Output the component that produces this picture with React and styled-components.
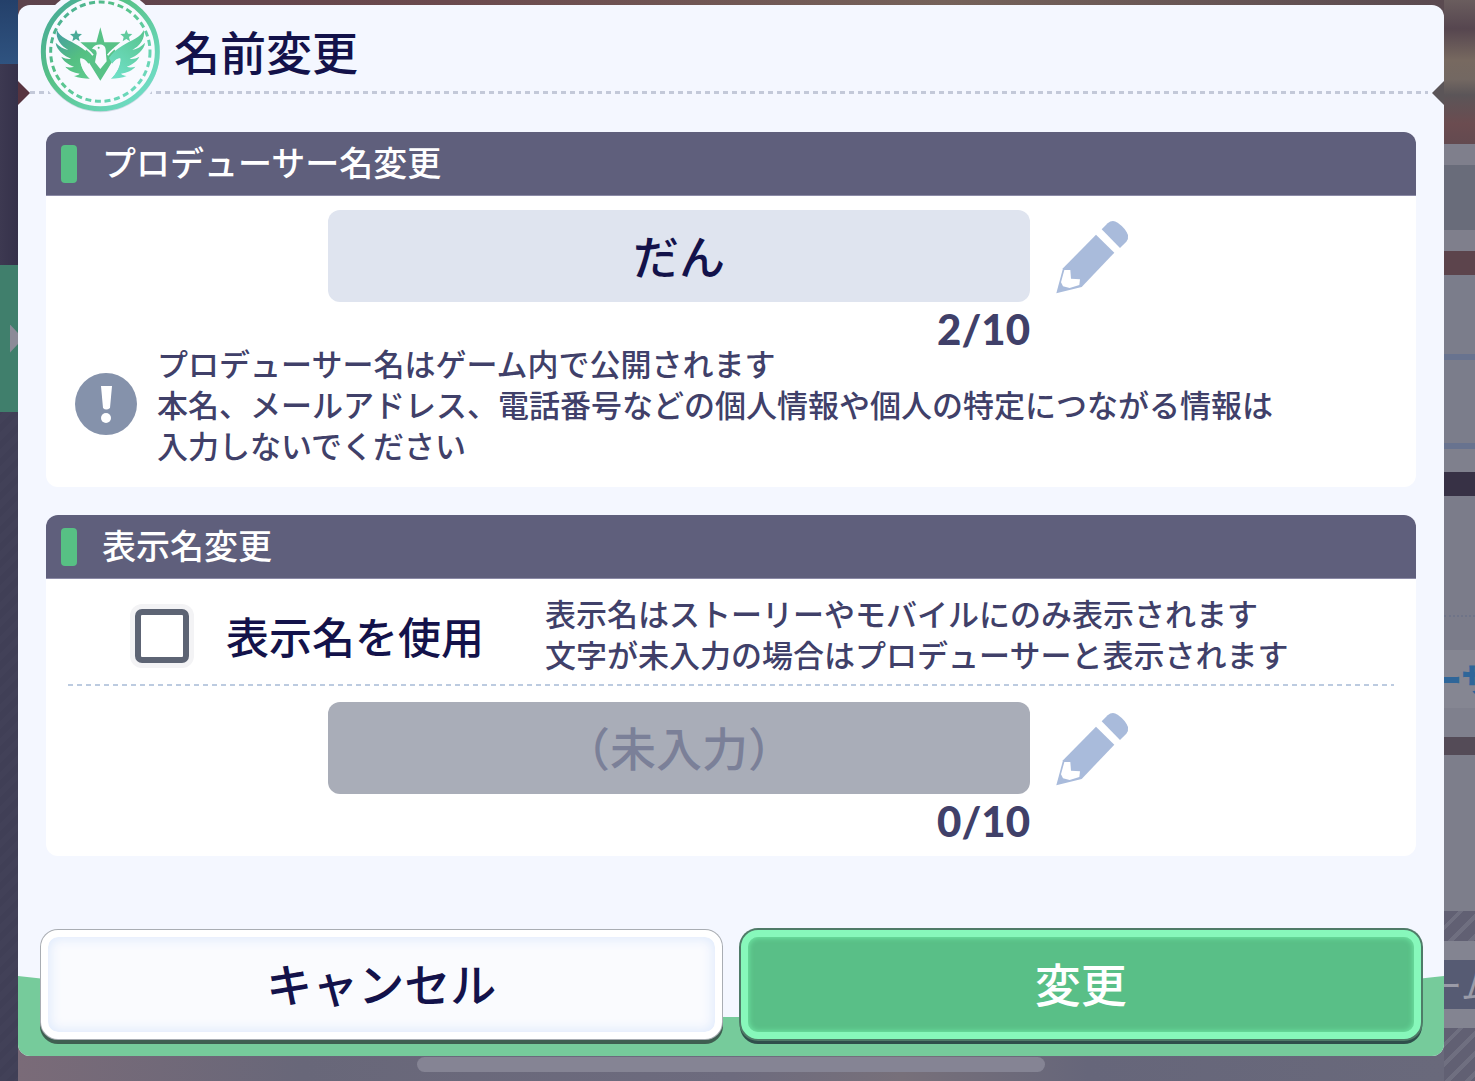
import React, { useRef, useState } from 'react'
import styled, { createGlobalStyle } from 'styled-components'

const GlobalStyle = createGlobalStyle`
  * {
    box-sizing: border-box;
  }

  body {
    margin: 0;
    background-color: #5c5a6c;
    font-family: "Noto Sans CJK JP", "Noto Sans", sans-serif;
  }

  button, input {
    font-family: inherit;
  }
`

const Screen = styled.div`
  min-height: 100vh;
  display: grid;
  grid-template-columns: 18px minmax(0, 1fr) 31px;
`

/* dimmed game screen on both sides of the dialog */

const LeftEdge = styled.div`
  display: flex;
  flex-direction: column;
  overflow: hidden;
  background: repeating-linear-gradient(135deg, #403f56 0 6px, #424158 6px 12px);
`

const LeftSky = styled.div`
  height: 64px;
  background: linear-gradient(#24406a, #2f5380);
`

const LeftWall = styled.div`
  height: 201px;
  background: linear-gradient(90deg, #3d3951, #35314a);
`

const LeftTab = styled.div`
  height: 147px;
  display: flex;
  align-items: center;
  justify-content: flex-end;
  background-color: #407f6c;
`

const TabArrow = styled.span`
  width: 8px;
  height: 28px;
  background-color: #8c8b98;
  clip-path: polygon(0 0, 100% 30%, 100% 70%, 0 100%);
`

const RightEdge = styled.div`
  display: flex;
  flex-direction: column;
  overflow: hidden;
  background-color: #7d7e8c;
`

const Strip = styled.div`
  flex: ${props => props.$grow ? '1 0 auto' : 'none'};
  height: ${props => props.$h}px;
  background: ${props => props.$bg};
  color: ${props => props.$color || '#9a9ba8'};
  display: flex;
  align-items: center;
  white-space: nowrap;
  overflow: hidden;
  font-size: 34px;
  line-height: 40px;
  font-weight: ${props => props.$bold ? 900 : 400};
  text-indent: -16px;
`

const DottedStrip = styled(Strip)`
  border-top: 2px dotted #6f7488;
`

const hatch = 'repeating-linear-gradient(135deg, #616073 0 10px, #6f6f80 10px 14px)'

/* dialog */

const Center = styled.div`
  display: flex;
  flex-direction: column;
  padding-top: 5px;
  background: linear-gradient(90deg, #5d434c, #6b4a4e 30%, #75625a 65%, #5a4a50) top / 100% 40px no-repeat,
    linear-gradient(90deg, #7a6b78, #686779 20%, #6d6b7e 50%, #77707a 62%, #66667a 75%, #69697b);
`

const Dialog = styled.form`
  position: relative;
  flex: 1;
  display: flex;
  flex-direction: column;
  margin: 0;
  border-radius: 12px;
  background-color: #f4f7ff;
`

const DialogHeader = styled.header`
  position: relative;
  height: 89px;
  padding: 0 28px 0 156px;
  display: flex;
  align-items: center;

  &::before, &::after {
    content: "";
    position: absolute;
    bottom: -11px;
    width: 12px;
    height: 24px;
  }

  &::before {
    left: 0;
    background-color: #573440;
    clip-path: polygon(0 0, 100% 50%, 0 100%);
  }

  &::after {
    right: 0;
    background-color: #5b5558;
    clip-path: polygon(100% 0, 0 50%, 100% 100%);
  }
`

const HeaderRule = styled.span`
  position: absolute;
  left: 12px;
  right: 16px;
  bottom: 0;
  height: 3px;
  background: repeating-linear-gradient(90deg, #c3c9d9 0 5px, transparent 5px 9px);
`

const EmblemBadge = styled.span`
  position: absolute;
  left: 17px;
  top: -15px;
  display: flex;
`

const DialogTitle = styled.h1`
  margin: 0;
  color: #13124a;
  font-size: 46px;
  line-height: 60px;
  font-weight: 500;
`

const DialogBody = styled.div`
  display: flex;
  flex-direction: column;
  gap: 28px;
  padding: 38px 28px 74px;
`

const Card = styled.section`
  overflow: hidden;
  border-radius: 12px;
  background-color: #fff;
`

const CardHeader = styled.header`
  height: 64px;
  display: flex;
  align-items: center;
  gap: 25px;
  padding: 0 15px;
  border-bottom: 1px solid #8b8aa6;
  background-color: #5f5f7c;

  &::before {
    content: "";
    width: 16px;
    height: 38px;
    border-radius: 4px;
    background-color: #57c084;
  }
`

const CardTitle = styled.h2`
  margin: 0;
  padding-bottom: 3px;
  color: #fff;
  font-size: 34px;
  line-height: 48px;
  font-weight: 500;
`

const FieldGrid = styled.div`
  display: grid;
  grid-template-columns: minmax(0, 702px) 104px;
  justify-content: center;
  align-items: center;
  padding-top: ${props => props.$top}px;
`

const TextBox = styled.input`
  width: 100%;
  height: 92px;
  padding: 0 16px 4px;
  border: none;
  border-radius: 12px;
  background-color: #dfe4ef;
  color: #13124a;
  font-size: 46px;
  font-style: oblique 10deg;
  font-weight: 500;
  text-align: center;
  outline: none;

  &::placeholder {
    color: #7b8098;
    opacity: 1;
    font-style: normal;
    font-weight: 500;
  }

  &:disabled {
    background-color: #a9adb8;
  }
`

const EditButton = styled.button`
  display: flex;
  padding: 2px 0 0;
  margin-left: 26px;
  border: none;
  background: none;
  cursor: pointer;

  &:disabled {
    cursor: default;
  }
`

const Counter = styled.output`
  padding-top: 14px;
  color: #404069;
  font-family: Lato, "Liberation Sans", sans-serif;
  font-size: 42px;
  line-height: 26px;
  font-weight: 900;
  text-align: right;
`

const Notice = styled.div`
  display: flex;
  align-items: center;
  gap: 20px;
  padding: 0 29px;

  svg {
    flex: none;
  }
`

const CardFoot = styled.div`
  height: 22px;
`

const Text = styled.p`
  margin: 0;
  color: #404069;
  font-size: 31px;
  line-height: 41px;
  font-weight: 500;
`

const OptionRow = styled.div`
  display: flex;
  align-items: flex-start;
  gap: 61px;
  margin: 0 22px;
  padding: 13px 0 12px 67px;
  background: repeating-linear-gradient(90deg, #bccbe0 0 5px, transparent 5px 9px) bottom / 100% 2px no-repeat;
`

const CheckLabel = styled.label`
  flex: none;
  display: flex;
  align-items: center;
  gap: 37px;
  padding-top: 15px;
  color: #13124a;
  font-size: 43px;
  line-height: 54px;
  font-weight: 500;
  cursor: pointer;
`

const CheckBox = styled.input`
  appearance: none;
  width: 54px;
  height: 54px;
  margin: 2px 0 0;
  display: grid;
  place-items: center;
  border: 6px solid #5d6474;
  border-radius: 7px;
  background-color: #fff;
  box-shadow: 0 0 0 5px #f3f3f5;

  &:checked::before {
    content: "";
    width: 28px;
    height: 28px;
    border-radius: 4px;
    background-color: #57c084;
  }
`

const DialogFooter = styled.footer`
  position: relative;
  margin-top: auto;
  display: grid;
  grid-template-columns: 1fr 1fr;
  gap: 19px;
  padding: 0 23px 17px;
`

const Wave = styled.svg`
  position: absolute;
  left: 0;
  bottom: 0;
  width: 100%;
  height: 80px;
  border-radius: 0 0 12px 12px;
`

const ActionButton = styled.button`
  position: relative;
  height: 109px;
  padding: 0 0 6px;
  border: 7px solid #fff;
  border-radius: 17px;
  background-color: #fafbfe;
  box-shadow: inset 0 0 12px 2px #dfeafc, 0 0 0 1px #a9adb3, 0 4px 0 1px #3f5f51;
  color: #13124a;
  font-size: 46px;
  line-height: 60px;
  font-weight: 500;
  cursor: pointer;
`

const SubmitButton = styled(ActionButton)`
  border-color: #87f8bb;
  background-color: #59bf87;
  box-shadow: inset 0 0 5px 1px #6ee6a3, 0 0 0 2px #4f7b68, 0 4px 0 1px #2f4f4b;
  color: #fff;
`

const HomeArea = styled.div`
  height: 25px;
  display: flex;
  justify-content: center;
  align-items: flex-start;
  padding-top: 1px;
`

const HomeIndicator = styled.span`
  width: 44%;
  height: 15px;
  border-radius: 8px;
  background-color: #858494;
`

const WING = 'M66 90 C74 112 102 120 130 137 C148 148 160 158 170 174 L160 192 C152 178 142 174 136 176 C136 196 148 220 165 236 C148 236 130 234 117 228 C124 227 130 225 134 221 C116 218 98 210 91 200 C100 203 110 203 117 200 C100 194 84 182 79 170 C90 176 100 178 108 176 C88 168 64 150 62 128 C72 139 86 147 100 150 C78 138 60 116 66 90Z'

const Emblem = () => (
  <svg width="130" height="130" viewBox="0 -30 390 390" aria-hidden="true">
    <defs>
      <linearGradient id="ring" gradientUnits="userSpaceOnUse" x1="60" y1="30" x2="330" y2="280">
        <stop offset="0" stopColor="#4bae96" />
        <stop offset="0.35" stopColor="#56c186" />
        <stop offset="1" stopColor="#6fdcc4" />
      </linearGradient>
      <linearGradient id="leftWing" gradientUnits="userSpaceOnUse" x1="66" y1="100" x2="160" y2="220">
        <stop offset="0" stopColor="#459fa0" />
        <stop offset="0.6" stopColor="#54bf82" />
        <stop offset="1" stopColor="#5cc98c" />
      </linearGradient>
      <linearGradient id="rightWing" gradientUnits="userSpaceOnUse" x1="66" y1="100" x2="160" y2="220">
        <stop offset="0" stopColor="#58c590" />
        <stop offset="1" stopColor="#70dfc6" />
      </linearGradient>
      <path id="spark" d="M0 -18 L5 -6 L18 -5 L8 4 L11 17 L0 10 L-11 17 L-8 4 L-18 -5 L-5 -6Z" />
    </defs>
    <circle cx="196" cy="155" r="195" fill="#f4f7ff" />
    <circle cx="196" cy="160" r="177" fill="#d3dae6" />
    <circle cx="196" cy="155" r="171" fill="#f8faff" stroke="url(#ring)" strokeWidth="15" />
    <circle cx="196" cy="155" r="149" fill="none" stroke="url(#ring)" strokeWidth="9" strokeDasharray="18 11" />
    <path d="M196 82 L208 127 H256 L236 144 L246 162 L196 242 L146 162 L156 144 L136 127 H184Z" fill="#58c287" />
    <path d={WING} fill="url(#leftWing)" />
    <path d={WING} fill="url(#rightWing)" transform="translate(392 0) scale(-1 1)" />
    <g fill="#f8faff">
      <path d="M136 175 C152 176 168 198 182 230 L166 238 C148 222 134 196 136 175Z" />
      <path d="M256 175 C240 176 224 198 210 230 L226 238 C244 222 258 196 256 175Z" />
    </g>
    <g fill="none" stroke="#f8faff" strokeWidth="5">
      <path d="M134 134 C152 142 164 152 174 166" />
      <path d="M258 134 C240 142 228 152 218 166" />
    </g>
    <path d="M171 146 C177 136 190 131 203 135 C213 139 213 152 213 164 L215 184 L196 207 L180 187 L185 160 C185 151 180 147 171 146Z" fill="#f8faff" />
    <circle cx="191" cy="143" r="3" fill="#54bf82" />
    <use href="#spark" x="123" y="107" fill="#4aaa98" />
    <use href="#spark" x="274" y="107" fill="#60cb9e" />
  </svg>
)

const Pencil = () => (
  <svg width="74" height="76" viewBox="469 60 222 228" fill="#a9bbdb" aria-hidden="true">
    <path d="M606 91 L624 73 Q638 60 654 71 Q678 88 685 108 Q687 120 680 128 L661 147Z" />
    <path d="M589 107 L644 161 L546 264 L470 283 L490 208Z" />
    <path d="M494 213 H512 L514 239 L541 241 L539 258 L510 267 L490 262 L484 250Z" fill="#fff" />
  </svg>
)

const AlertIcon = () => (
  <svg width="62" height="62" viewBox="0 0 62 62" aria-hidden="true">
    <circle cx="31" cy="31" r="31" fill="#8592ab" />
    <path d="M26 13 H37 L35 35 Q31 38 28 35Z" fill="#fff" />
    <circle cx="31" cy="45" r="5" fill="#fff" />
  </svg>
)

const MAX_LENGTH = 10

const App = () => {
  const [producerName, setProducerName] = useState('だん')
  const [displayName, setDisplayName] = useState('')
  const [useDisplayName, setUseDisplayName] = useState(false)
  const producerRef = useRef(null)
  const displayRef = useRef(null)

  return (
    <>
      <GlobalStyle />
      <Screen>
        <LeftEdge>
          <LeftSky />
          <LeftWall />
          <LeftTab><TabArrow /></LeftTab>
        </LeftEdge>

        <Center>
          <Dialog onSubmit={e => e.preventDefault()}>
            <DialogHeader>
              <HeaderRule />
              <EmblemBadge><Emblem /></EmblemBadge>
              <DialogTitle>名前変更</DialogTitle>
            </DialogHeader>

            <DialogBody>
              <Card>
                <CardHeader>
                  <CardTitle id="producer-title">プロデューサー名変更</CardTitle>
                </CardHeader>
                <FieldGrid $top={14}>
                  <TextBox
                    ref={producerRef}
                    aria-labelledby="producer-title"
                    maxLength={MAX_LENGTH}
                    value={producerName}
                    onChange={e => setProducerName(e.target.value)}
                  />
                  <EditButton type="button" aria-label="プロデューサー名を編集" onClick={() => producerRef.current.focus()}>
                    <Pencil />
                  </EditButton>
                  <Counter>{producerName.length}/{MAX_LENGTH}</Counter>
                </FieldGrid>
                <Notice>
                  <AlertIcon />
                  <Text>
                    プロデューサー名はゲーム内で公開されます<br />
                    本名、メールアドレス、電話番号などの個人情報や個人の特定につながる情報は<br />
                    入力しないでください
                  </Text>
                </Notice>
                <CardFoot />
              </Card>

              <Card>
                <CardHeader>
                  <CardTitle id="display-title">表示名変更</CardTitle>
                </CardHeader>
                <OptionRow>
                  <CheckLabel>
                    <CheckBox
                      type="checkbox"
                      checked={useDisplayName}
                      onChange={e => setUseDisplayName(e.target.checked)}
                    />
                    表示名を使用
                  </CheckLabel>
                  <Text>
                    表示名はストーリーやモバイルにのみ表示されます<br />
                    文字が未入力の場合はプロデューサーと表示されます
                  </Text>
                </OptionRow>
                <FieldGrid $top={16}>
                  <TextBox
                    ref={displayRef}
                    aria-labelledby="display-title"
                    placeholder="（未入力）"
                    maxLength={MAX_LENGTH}
                    disabled={!useDisplayName}
                    value={displayName}
                    onChange={e => setDisplayName(e.target.value)}
                  />
                  <EditButton
                    type="button"
                    aria-label="表示名を編集"
                    disabled={!useDisplayName}
                    onClick={() => displayRef.current.focus()}
                  >
                    <Pencil />
                  </EditButton>
                  <Counter>{displayName.length}/{MAX_LENGTH}</Counter>
                </FieldGrid>
                <CardFoot />
              </Card>
            </DialogBody>

            <DialogFooter>
              <Wave viewBox="0 0 1426 80" preserveAspectRatio="none" aria-hidden="true">
                <path d="M0 0 Q713 82 1426 0 V80 H0Z" fill="#76cb9b" />
              </Wave>
              <ActionButton type="button">キャンセル</ActionButton>
              <SubmitButton type="submit">変更</SubmitButton>
            </DialogFooter>
          </Dialog>
          <HomeArea><HomeIndicator /></HomeArea>
        </Center>

        <RightEdge>
          <Strip $h={144} $bg="linear-gradient(#6a5d5e, #56464f 20%, #776960 42%, #736862 55%, #5b5558 66%, #6b4c50 86%, #634a50)" />
          <Strip $h={21} $bg="#7f7f8c" />
          <Strip $h={65} $bg="#696c7a" />
          <Strip $h={21} $bg="#7f7f8c" />
          <Strip $h={24} $bg="#5c444c" />
          <Strip $h={79} $bg="#7b7d8b" />
          <Strip $h={6} $bg="#68738f" />
          <Strip $h={83} $bg="#7b7d8b" />
          <Strip $h={6} $bg="#68738f" />
          <Strip $h={23} $bg="#7f808d" />
          <Strip $h={24} $bg="#373145" />
          <Strip $h={119} $bg="#7b7c8a" />
          <DottedStrip $h={35} $bg="#7b7c8a" />
          <Strip $h={58} $bg="#858692" $color="#2f6699" $bold>ーサ</Strip>
          <Strip $h={29} $bg="#7f808d" />
          <Strip $h={18} $bg="#544b57" />
          <Strip $h={156} $bg="#7d7e8b" />
          <Strip $h={30} $bg={hatch} />
          <Strip $h={19} $bg="#838491" />
          <Strip $h={49} $bg="#565b73">ーム</Strip>
          <Strip $h={19} $bg="#838491" />
          <Strip $h={53} $bg={hatch} $grow />
        </RightEdge>
      </Screen>
    </>
  )
}

export default App
